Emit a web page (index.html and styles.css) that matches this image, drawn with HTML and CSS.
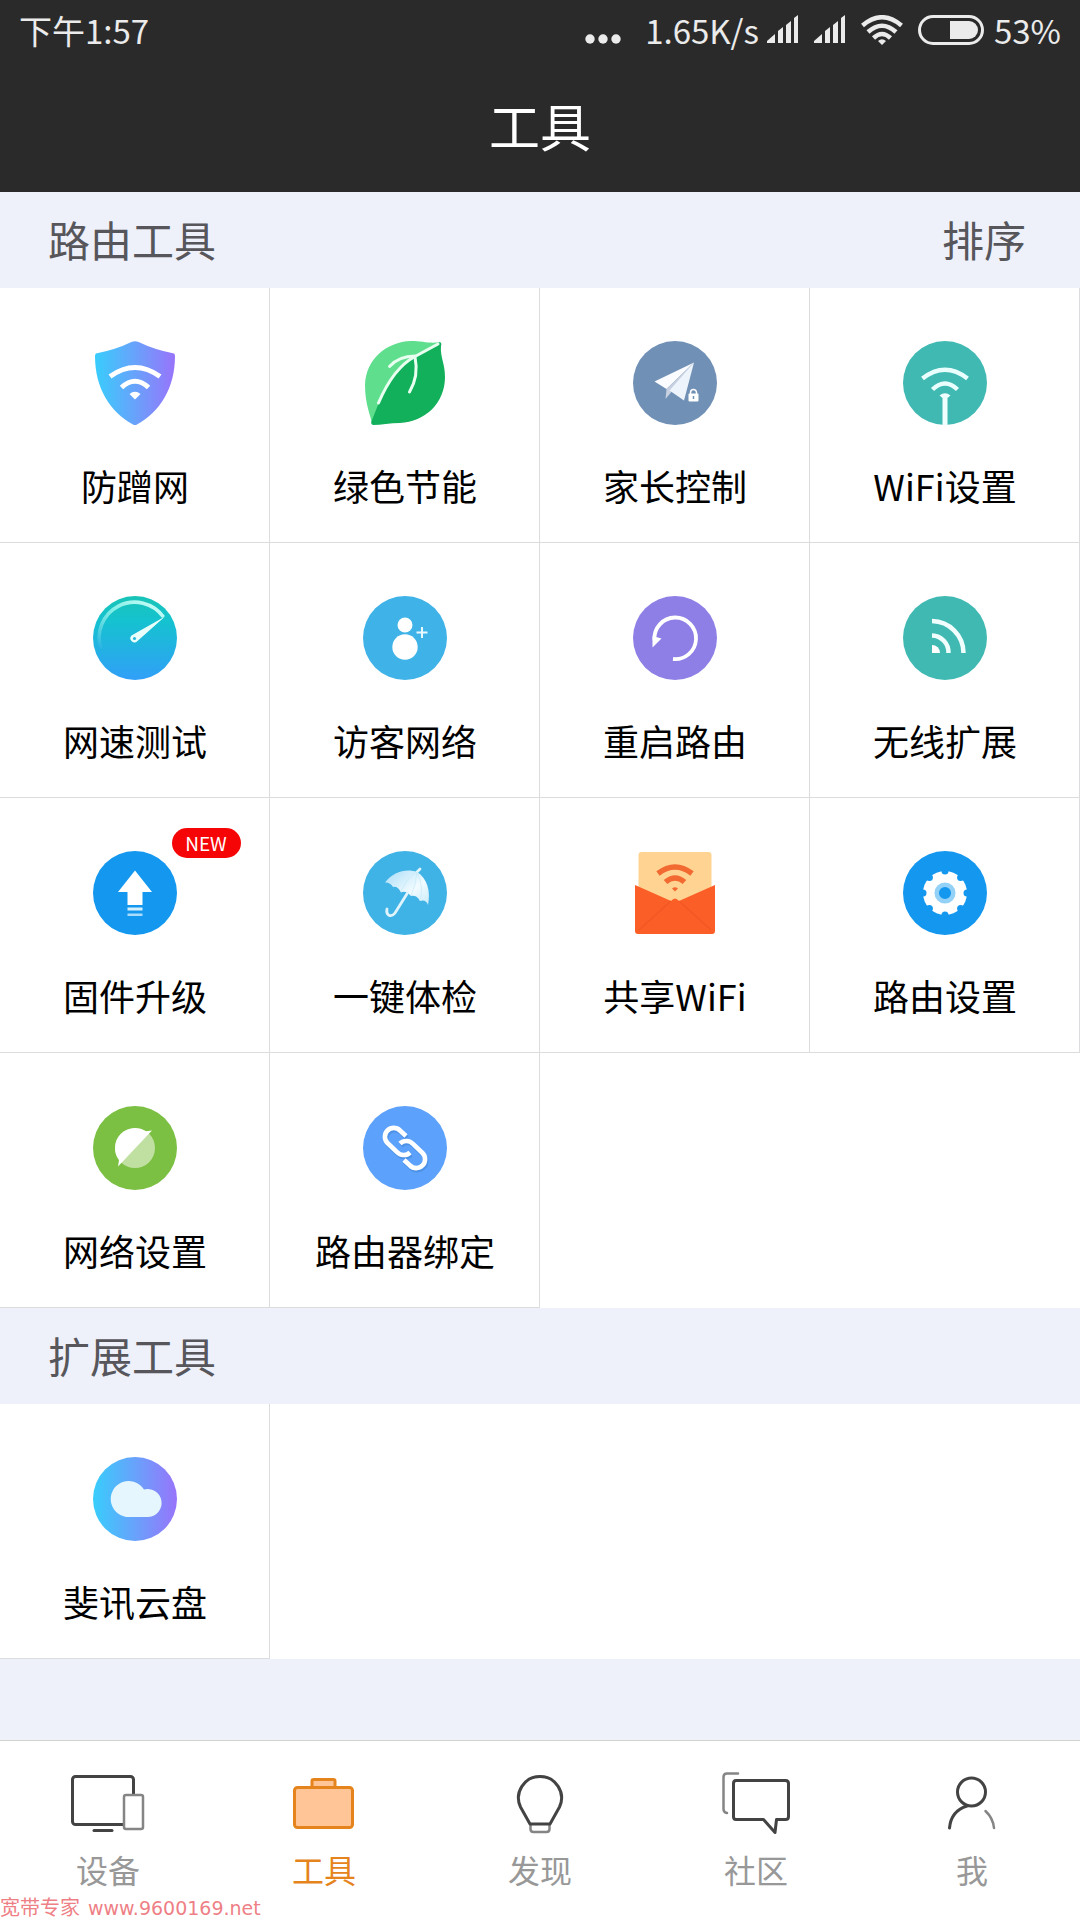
FILE: index.html
```html
<!DOCTYPE html>
<html lang="zh-CN">
<head>
<meta charset="utf-8">
<meta name="viewport" content="width=device-width, initial-scale=1">
<title>工具</title>
<link rel="stylesheet" href="styles.css">
</head>
<body>
<div class="app">
  <header class="header">
    <div class="status">
      <span>下午1:57</span>
      <div class="status-right">
        <svg class="dots" width="36" height="30" viewBox="0 0 36 30" aria-hidden="true"><circle cx="5" cy="24" r="4.7"/><circle cx="18" cy="24" r="4.7"/><circle cx="31" cy="24" r="4.7"/></svg>
        <span class="speed">1.65K/s</span>
        <svg class="signal" width="32" height="30" viewBox="0 0 32 30" aria-hidden="true"><path d="M0 28V26L8 19V28ZM11 28V16L16 12V28ZM19 28V10L24 6V28ZM27 28V3L31 0V28Z"/></svg>
        <svg class="signal" width="32" height="30" viewBox="0 0 32 30" aria-hidden="true"><path d="M0 28V26L8 19V28ZM11 28V16L16 12V28ZM19 28V10L24 6V28ZM27 28V3L31 0V28Z"/></svg>
        <svg class="wifi" width="42" height="30" viewBox="0 0 42 30" aria-hidden="true"><g fill="none" stroke="#ebebeb" stroke-width="4.500"><path d="M1.500 10.500Q21 -6 40.500 10.500"/><path d="M7 17Q21 4.500 35 17"/><path d="M12.500 23Q21 15 29.500 23"/></g><path d="M17 26Q21 22.500 25 26L21 30Z"/></svg>
        <svg class="battery" width="66" height="30" viewBox="0 0 66 30" aria-hidden="true"><rect x="1.500" y="1.500" width="63" height="27" rx="13.500" fill="none" stroke="#ebebeb" stroke-width="3"/><path d="M32 6H51A9 9 0 0 1 51 24H32Z"/></svg>
        <span>53%</span>
      </div>
    </div>
    <h1 class="title">工具</h1>
  </header>

  <main class="main">
    <section>
      <div class="section-head"><h2>路由工具</h2><button class="sort" type="button">排序</button></div>
      <div class="grid">
        <button class="tool" type="button">
          <svg class="icon" viewBox="0 0 84 84" aria-hidden="true"><defs><linearGradient id="violet"><stop offset="0" stop-color="#38cdfc"/><stop offset=".5" stop-color="#68a2fb"/><stop offset="1" stop-color="#9874fb"/></linearGradient></defs><path d="M39 .8Q42 -.5 45 .8Q62 9 81 12.500Q82 13 82 15C82 47 67 71 44 83.500Q42 84.500 40 83.500C17 71 2 47 2 15Q2 13 3 12.500Q22 9 39 .8Z" fill="url(#violet)"/><g fill="none" stroke="#fff" stroke-width="5"><path d="M17 35.500Q42 17.500 67 35.500"/><path d="M28.500 46.500Q42 34 55.500 46.500"/></g><path d="M36.500 53Q42 48.500 47.500 53L42 58.500Z" fill="#fff"/></svg>
          <span>防蹭网</span>
        </button>
        <button class="tool" type="button">
          <svg class="icon" viewBox="0 0 84 84" aria-hidden="true"><path d="M9 83C8 75 2 64 2 44C3 18 23 1 48 0C60 0 67 3 77 1L50 18Z" fill="#5fdf8e"/><path d="M77 1Q79 2 78 5C77 16 82 22 82 36C82 62 62 81 37 82C27 82 18 84 10 84Q7 83 9 79L15 64C25 42 38 24 50 16Z" fill="#12b05b"/><g fill="none" stroke="#e9fff0" stroke-width="3" stroke-linecap="round"><path d="M15.500 62C24 42 36 24 52 15.500L75 3"/><path d="M26.500 25.500Q36 15 52 15"/><path d="M52 16Q56 35 46.500 51"/></g></svg>
          <span>绿色节能</span>
        </button>
        <button class="tool" type="button">
          <svg class="icon" viewBox="0 0 84 84" aria-hidden="true"><circle cx="42" cy="42" r="42" fill="#7090b6"/><path d="M61 21.500L21.500 40.500L33.500 48Z" fill="#fbfcff"/><path d="M61 21.500L33.500 48L32.500 58L38 51.500Z" fill="#c6d0e0"/><path d="M61 21.500L36.500 49.500L51 59.500Z" fill="#eef4fb"/><rect x="55.500" y="52.500" width="10" height="8" rx="1" fill="#fff"/><path d="M57.500 53V51.500A3 3 0 0 1 63.500 51.500V53" fill="none" stroke="#fff" stroke-width="1.500"/><path d="M60.500 55V58" stroke="#7090b6" stroke-width="1.500"/></svg>
          <span>家长控制</span>
        </button>
        <button class="tool" type="button">
          <svg class="icon" viewBox="0 0 84 84" aria-hidden="true"><circle cx="42" cy="42" r="42" fill="#41b9b3"/><g fill="none" stroke="#e9fffd" stroke-width="4.500"><path d="M19.500 37.500Q42 20 64.500 37.500"/><path d="M29.500 48.500Q42 36.500 54.500 48.500"/></g><path d="M36.500 54.500Q42 50 47.500 54.500L44.500 57V84H39.500V57Z" fill="#effffd"/></svg>
          <span>WiFi设置</span>
        </button>
        <button class="tool" type="button">
          <svg class="icon" viewBox="0 0 84 84" aria-hidden="true"><defs><linearGradient id="gauge" x2="0" y2="1"><stop offset="0" stop-color="#18c4b6"/><stop offset=".3" stop-color="#15c2d0"/><stop offset="1" stop-color="#319ff8"/></linearGradient><linearGradient id="dial" x1="0" y1="1" x2="1" y2="0"><stop offset="0" stop-color="#fff" stop-opacity="0"/><stop offset=".5" stop-color="#a8fff5" stop-opacity=".7"/><stop offset="1" stop-color="#d8fffb"/></linearGradient></defs><circle cx="42" cy="42" r="42" fill="url(#gauge)"/><path d="M8 53A35.500 35.500 0 0 1 70.500 21" fill="none" stroke="url(#dial)" stroke-width="3.500"/><path d="M72 20.500L38.500 39.500A4 4 0 1 0 44.500 45Z" fill="#e9fffc"/><circle cx="41.500" cy="42.500" r="1.600" fill="#29b9dc"/></svg>
          <span>网速测试</span>
        </button>
        <button class="tool" type="button">
          <svg class="icon" viewBox="0 0 84 84" aria-hidden="true"><circle cx="42" cy="42" r="42" fill="#3fb2e8"/><circle cx="42" cy="29" r="7.500" fill="#fff"/><circle cx="42" cy="51" r="12.700" fill="#fff"/><path d="M59 31V42M53.500 36.500H64.500" stroke="#e9faff" stroke-width="2"/></svg>
          <span>访客网络</span>
        </button>
        <button class="tool" type="button">
          <svg class="icon" viewBox="0 0 84 84" aria-hidden="true"><circle cx="42" cy="42" r="42" fill="#8d7fe5"/><path d="M40 63A20.800 20.800 0 1 0 21.500 44" fill="none" stroke="#fff" stroke-width="3.800"/><path d="M19.500 40V51.500L28.500 42.500Z" fill="#fff"/></svg>
          <span>重启路由</span>
        </button>
        <button class="tool" type="button">
          <svg class="icon" viewBox="0 0 84 84" aria-hidden="true"><circle cx="42" cy="42" r="42" fill="#41b9b3"/><path d="M29 49A8 8 0 0 1 37 57H29Z" fill="#fff"/><g fill="none" stroke="#f0fffe" stroke-width="4.500"><path d="M29 39.500A17 17 0 0 1 45.500 57"/><path d="M29 25A32 32 0 0 1 60.500 57"/></g></svg>
          <span>无线扩展</span>
        </button>
        <button class="tool" type="button">
          <svg class="icon" viewBox="0 0 84 84" aria-hidden="true"><circle cx="42" cy="42" r="42" fill="#1397ef"/><path d="M42 19.500L59 41H49.500V54H34.500V41H25Z" fill="#fff"/><path d="M34.500 56.500H49.500V59.500H34.500Z" fill="#d5effd"/><path d="M34.500 62.500H49.500V65H34.500Z" fill="#a9dcfa"/></svg>
          <span>固件升级</span>
          <em class="badge">NEW</em>
        </button>
        <button class="tool" type="button">
          <svg class="icon" viewBox="0 0 84 84" aria-hidden="true"><defs><linearGradient id="canopy" x2="1" y2="1"><stop offset="0" stop-color="#a8ddf8"/><stop offset=".6" stop-color="#f2fbff"/><stop offset="1" stop-color="#c8ebfa"/></linearGradient></defs><circle cx="42" cy="42" r="42" fill="#3fb2e6"/><path d="M22 31.500C30 21 43 17 54 21C64 27 68 40 65 54Q63 48 57 50Q54 44 48 45Q43 39 38 41.500Q35 35 30 36Q27 31 22 31.500Z" fill="url(#canopy)"/><path d="M54 21L57 18M44.500 42L32 62Q29 66 25.500 64Q23 62 24 58" fill="none" stroke="#dff4fd" stroke-width="2.800" stroke-linecap="round"/><path d="M54 21Q43 27 38 41M54 21Q53 33 48 45M54 21Q61 35 57 50" fill="none" stroke="#bfe6f6" stroke-width=".6"/></svg>
          <span>一键体检</span>
        </button>
        <button class="tool" type="button">
          <svg class="icon" viewBox="0 0 84 84" aria-hidden="true"><rect x="5.500" y="1" width="73" height="60" rx="3" fill="#ffd392"/><g fill="none" stroke="#f26a32" stroke-width="5.500"><path d="M25 22.500Q42 9.500 59 22.500"/><path d="M32.500 31Q42 23 51.500 31"/></g><path d="M39 37.500Q42 35 45 37.500L42 40.500Z" fill="#f26a32"/><path d="M2 34L38 50Q42 45 46 50L82 34V80Q82 83 79 83H5Q2 83 2 80Z" fill="#fb5e27"/><path d="M38 50L6 79M46 50L78 79" fill="none" stroke="#f35723" stroke-width="1.500"/></svg>
          <span>共享WiFi</span>
        </button>
        <button class="tool" type="button">
          <svg class="icon" viewBox="0 0 84 84" aria-hidden="true"><circle cx="42" cy="42" r="42" fill="#1397ef"/><circle cx="42" cy="42" r="22" fill="#fff"/><g fill="#1397ef"><circle cx="42" cy="20" r="3.500"/><circle cx="57.600" cy="26.400" r="3.500"/><circle cx="64" cy="42" r="3.500"/><circle cx="57.600" cy="57.600" r="3.500"/><circle cx="42" cy="64" r="3.500"/><circle cx="26.400" cy="57.600" r="3.500"/><circle cx="20" cy="42" r="3.500"/><circle cx="26.400" cy="26.400" r="3.500"/></g><circle cx="42" cy="42" r="8.300" fill="#1397ef" stroke="#94d1f6" stroke-width="4.500"/></svg>
          <span>路由设置</span>
        </button>
        <button class="tool" type="button">
          <svg class="icon" viewBox="0 0 84 84" aria-hidden="true"><circle cx="42" cy="42" r="42" fill="#7bbf43"/><circle cx="42" cy="42" r="20" fill="#c0e0a2"/><path d="M25 60.500L26 54A20 20 0 0 1 53 25.300L59 24.500Z" fill="#fff"/></svg>
          <span>网络设置</span>
        </button>
        <button class="tool" type="button">
          <svg class="icon" viewBox="0 0 84 84" aria-hidden="true"><circle cx="42" cy="42" r="42" fill="#5ca1fb"/><g fill="none" stroke-width="4.600"><g stroke="#4287d8" opacity=".6" transform="translate(1 2)"><path d="M43 30L37 24.500A8.700 8.700 0 0 0 24.500 37L34 46A9 9 0 0 0 47 46.500"/><path d="M41 54L47 59.500A8.700 8.700 0 0 0 59.500 47L50 38A9 9 0 0 0 37 37.500"/></g><g stroke="#fff"><path d="M43 30L37 24.500A8.700 8.700 0 0 0 24.500 37L34 46A9 9 0 0 0 47 46.500"/><path d="M41 54L47 59.500A8.700 8.700 0 0 0 59.500 47L50 38A9 9 0 0 0 37 37.500"/></g></g></svg>
          <span>路由器绑定</span>
        </button>
      </div>
    </section>

    <section>
      <div class="section-head"><h2>扩展工具</h2></div>
      <div class="grid">
        <button class="tool" type="button">
          <svg class="icon" viewBox="0 0 84 84" aria-hidden="true"><circle cx="42" cy="42" r="42" fill="url(#violet)"/><path d="M36 60A18 18 0 1 1 51 32.500A14 14 0 1 1 55.500 60Z" fill="#e5f6fe"/></svg>
          <span>斐讯云盘</span>
        </button>
      </div>
    </section>
  </main>

  <nav class="tabs">
    <a class="tab" href="#devices">
      <svg class="tab-icon" viewBox="0 0 84 64" aria-hidden="true"><rect x="6.500" y="6.500" width="61" height="48" rx="3" fill="none" stroke="#434343" stroke-width="3"/><path d="M28 60.500H46" stroke="#434343" stroke-width="3" stroke-linecap="round"/><rect x="58" y="25" width="19" height="34" rx="2" fill="#fff" stroke="#858585" stroke-width="2.500"/></svg>
      <span>设备</span>
    </a>
    <a class="tab tab-active" href="#tools" aria-current="page">
      <svg class="tab-icon" viewBox="0 0 84 64" aria-hidden="true"><g fill="#ffc597" stroke="#e5841c" stroke-width="3"><path d="M30 17V11Q30 9.500 31.500 9.500H51.500Q53 9.500 53 11V17"/><rect x="12.500" y="17.500" width="58" height="40" rx="3"/></g></svg>
      <span>工具</span>
    </a>
    <a class="tab" href="#discover">
      <svg class="tab-icon" viewBox="0 0 84 64" aria-hidden="true"><path d="M32.500 54V59Q32.500 62 35.500 62H48.500Q51.500 62 51.500 59V54" fill="none" stroke="#858585" stroke-width="2.500"/><path d="M32 54L22.500 37A21.500 21.500 0 1 1 61.500 37L52 54Z" fill="#fff" stroke="#434343" stroke-width="3" stroke-linejoin="round"/></svg>
      <span>发现</span>
    </a>
    <a class="tab" href="#community">
      <svg class="tab-icon" viewBox="0 0 84 64" aria-hidden="true"><path d="M24 3.500H13Q9.500 3.500 9.500 7V39Q9.500 42.500 13 43" fill="none" stroke="#858585" stroke-width="2.500" stroke-linecap="round"/><path d="M22 10.500H71.500Q74.500 10.500 74.500 13.500V46.500Q74.500 49.500 71.500 49.500H62.500L61 62.500L49.500 49.500H22Q19.500 49.500 19.500 46.500V13.500Q19.500 10.500 22 10.500Z" fill="none" stroke="#434343" stroke-width="3" stroke-linejoin="round"/></svg>
      <span>社区</span>
    </a>
    <a class="tab" href="#me">
      <svg class="tab-icon" viewBox="0 0 84 64" aria-hidden="true"><g fill="none" stroke-linecap="round"><circle cx="41.500" cy="22" r="14" stroke="#434343" stroke-width="3"/><path d="M37 36Q21 41 19.500 58" stroke="#434343" stroke-width="3"/><path d="M55.500 41Q63 48 64 58" stroke="#858585" stroke-width="2.500"/></g></svg>
      <span>我</span>
    </a>
  </nav>
  <div class="watermark"><span class="watermark-name">宽带专家</span><span>www.9600169.net</span></div>
</div>
</body>
</html>
```
FILE: styles.css
```css
* {
  box-sizing: border-box;
}

body {
  margin: 0;
  background: #eef0fa;
  font-family: "Noto Sans CJK SC", "Noto Sans", sans-serif;
}

button {
  margin: 0;
  padding: 0;
  border: 0;
  background: none;
  font: inherit;
  color: inherit;
}

.app {
  position: relative;
  display: flex;
  flex-direction: column;
  min-height: 100vh;
}

/* Header */
.header {
  background: #2a2a2a;
  color: #fff;
}

.status {
  display: flex;
  align-items: center;
  justify-content: space-between;
  height: 60px;
  padding: 0 19px;
  color: #ebebeb;
  font-size: 33px;
  line-height: 48px;
}

.status-right {
  display: flex;
  align-items: center;
}

.status svg {
  fill: #ebebeb;
}

.speed {
  margin-left: 24px;
}

.signal {
  margin-left: 8px;
}

.signal + .signal {
  margin-left: 15px;
}

.wifi {
  margin-left: 15px;
}

.battery {
  margin: 0 10px 0 15px;
}

.title {
  margin: 0;
  padding: 28px 0 30px;
  font-size: 51px;
  font-weight: 400;
  line-height: 74px;
  text-align: center;
}

/* Tool sections */
.main {
  flex: 1;
}

.section-head {
  display: flex;
  align-items: center;
  justify-content: space-between;
  height: 96px;
  padding: 0 54px 4px 48px;
  color: #56565b;
  font-size: 42px;
}

.section-head h2 {
  margin: 0;
  font-size: inherit;
  font-weight: 400;
}

.grid {
  display: grid;
  grid-template-columns: repeat(4, 1fr);
  background: #fff;
}

.tool {
  position: relative;
  display: flex;
  flex-direction: column;
  align-items: center;
  gap: 33px;
  padding: 53px 0 30px 1px;
  border-right: 1px solid #dcdcde;
  border-bottom: 1px solid #dcdcde;
  color: #000;
  font-size: 36px;
  line-height: 54px;
}

.icon {
  width: 84px;
  height: 84px;
}

.badge {
  position: absolute;
  top: 30px;
  left: calc(50% + 37px);
  width: 69px;
  border-radius: 15px;
  background: #f50505;
  color: #fff;
  font-size: 19px;
  font-style: normal;
  line-height: 30px;
  text-align: center;
}

/* Bottom navigation */
.tabs {
  display: grid;
  grid-template-columns: repeat(5, 1fr);
  height: 180px;
  border-top: 1px solid #d3d3d0;
  background: #fff;
}

.tab {
  display: flex;
  flex-direction: column;
  align-items: center;
  gap: 14px;
  padding-top: 29px;
  color: #989898;
  font-size: 32px;
  line-height: 42px;
  text-decoration: none;
}

.tab-active {
  color: #e5841c;
}

.tab-icon {
  width: 84px;
  height: 64px;
}

.watermark {
  position: absolute;
  bottom: 0;
  left: 0;
  display: flex;
  gap: 8px;
  color: #ee7f86;
  font-family: "DejaVu Sans", "Noto Sans CJK SC", sans-serif;
  font-size: 19px;
  line-height: 24px;
}

.watermark-name {
  font-size: 20px;
}
```
